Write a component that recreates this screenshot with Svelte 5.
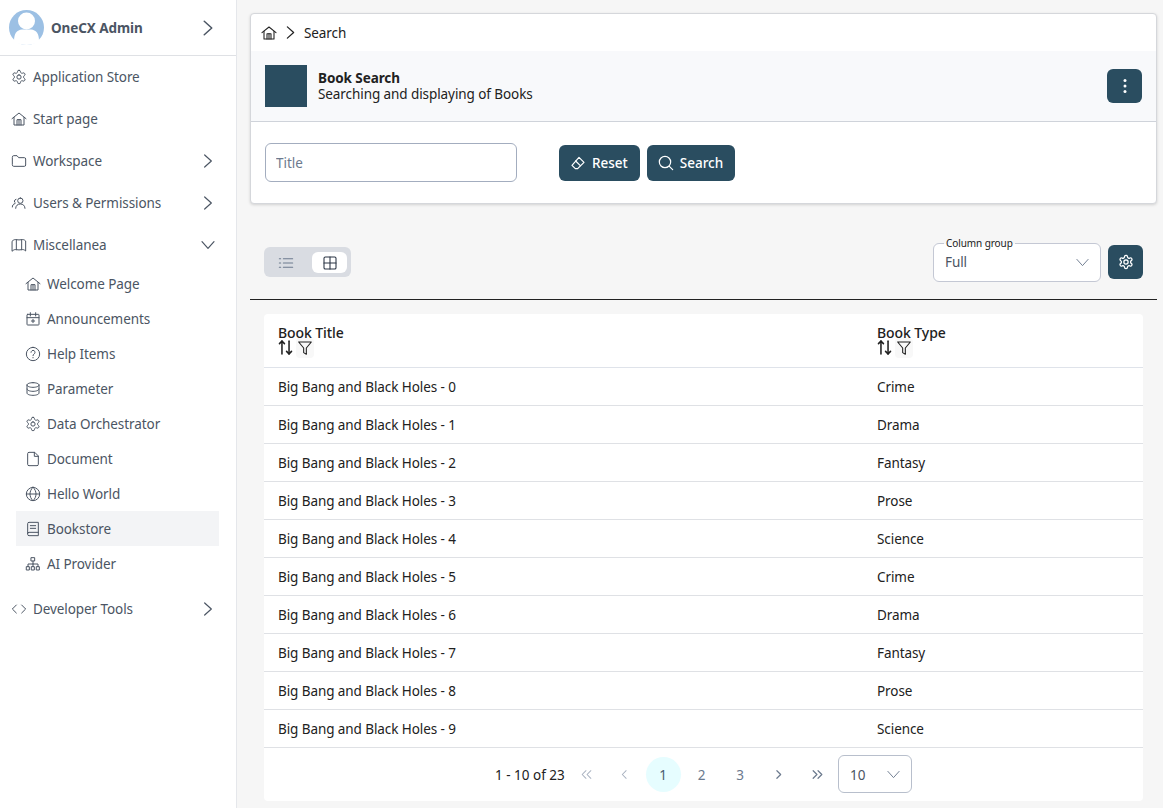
<script>
  const icons = {
    gear: ["M12.220 2h-.44a2 2 0 0 0-2 2v.18a2 2 0 0 1-1 1.730l-.43.25a2 2 0 0 1-2 0l-.15-.08a2 2 0 0 0-2.730.73l-.22.38a2 2 0 0 0 .73 2.730l.15.1a2 2 0 0 1 1 1.720v.51a2 2 0 0 1-1 1.740l-.15.09a2 2 0 0 0-.73 2.730l.22.38a2 2 0 0 0 2.730.73l.15-.08a2 2 0 0 1 2 0l.43.25a2 2 0 0 1 1 1.730V20a2 2 0 0 0 2 2h.44a2 2 0 0 0 2-2v-.18a2 2 0 0 1 1-1.730l.43-.25a2 2 0 0 1 2 0l.15.08a2 2 0 0 0 2.730-.73l.22-.39a2 2 0 0 0-.73-2.730l-.15-.08a2 2 0 0 1-1-1.740v-.5a2 2 0 0 1 1-1.740l.15-.09a2 2 0 0 0 .73-2.730l-.22-.38a2 2 0 0 0-2.730-.73l-.15.08a2 2 0 0 1-2 0l-.43-.25a2 2 0 0 1-1-1.730V4a2 2 0 0 0-2-2z", "M12 8.800a3.200 3.200 0 1 0 0 6.400 3.200 3.200 0 0 0 0-6.400z"],
    home: ["M1.500 11.500 12 3l10.500 8.500", "M4.500 9.500V21h15V9.500", "M9 21v-8h6v8", "M12 13v8"],
    folder: ["M2 6a2 2 0 0 1 2-2h5l2.500 3H20a2 2 0 0 1 2 2v9a2 2 0 0 1-2 2H4a2 2 0 0 1-2-2z"],
    users: ["M14 4.500a4 4 0 1 0 0 8 4 4 0 0 0 0-8z", "M7 20c0-4 3-6.500 7-6.500s7 2.500 7 6.500", "M7.500 6.500a3 3 0 0 0-1 5.500", "M2 18c0-2.500 1.200-4.300 3.500-5"],
    map: ["M2 6c2-2 4-2.500 6-2 2.500.5 5.500.5 8 0 2-.5 4 0 6 2v15c-2-2-4-2.500-6-2-2.500.5-5.500.5-8 0-2-.5-4 0-6 2z", "M8 3.800v15.400", "M16 3.800v15.400"],
    calendar: ["M4 5h16a1 1 0 0 1 1 1v14a1 1 0 0 1-1 1H4a1 1 0 0 1-1-1V6a1 1 0 0 1 1-1z", "M3 10h18", "M8 2.500v5", "M16 2.500v5", "M12 12.500v5", "M9.500 15h5"],
    help: ["M12 2a10 10 0 1 0 0 20 10 10 0 0 0 0-20z", "M9 9.500a3 3 0 1 1 4.500 2.600c-1 .6-1.500 1.300-1.500 2.400", "M12 17.200v.6"],
    database: ["M12 2.500c5 0 9 1.500 9 3.500s-4 3.500-9 3.500S3 8 3 6s4-3.500 9-3.500z", "M3 6v12c0 2 4 3.500 9 3.500s9-1.500 9-3.500V6", "M3 12c0 2 4 3.500 9 3.500s9-1.500 9-3.500"],
    file: ["M14 2H6a2 2 0 0 0-2 2v16a2 2 0 0 0 2 2h12a2 2 0 0 0 2-2V8z", "M14 2v6h6"],
    globe: ["M12 2a10 10 0 1 0 0 20 10 10 0 0 0 0-20z", "M2 12h20", "M12 2c3 2.800 4.500 6.200 4.500 10s-1.500 7.200-4.500 10c-3-2.800-4.500-6.200-4.500-10S9 4.800 12 2z"],
    book: ["M4 19V4a2 2 0 0 1 2-2h14v20H6a2 2 0 0 1-2-2v-1a2 2 0 0 1 2-2h14", "M8 7h8", "M8 11h8"],
    sitemap: ["M9.500 2.500h5v5h-5z", "M12 7.500V12", "M4.500 16v-4h15v4", "M12 12v4", "M2.500 16h4v5h-4z", "M10 16h4v5h-4z", "M17.500 16h4v5h-4z"],
    code: ["M8 6l-6 6 6 6", "M16 6l6 6-6 6"],
    right: ["M7 3l10 9-10 9"],
    down: ["M3 7l9 10 9-10"],
    eraser: ["M13.500 3.500 21 11 11.500 20.500H8L3 15.500z", "M8.500 9l7 7"],
    search: ["M10.500 2a8.500 8.500 0 1 0 0 17 8.500 8.500 0 0 0 0-17z", "M17 17l5 5"],
    list: ["M8 5.500h14", "M8 12h14", "M8 18.500h14", "M2 5.500h2", "M2 12h2", "M2 18.500h2"],
    table: ["M5 3h14a2 2 0 0 1 2 2v14a2 2 0 0 1-2 2H5a2 2 0 0 1-2-2V5a2 2 0 0 1 2-2z", "M3 12h18", "M12 3v18"],
    sort: ["M7 21V3", "M3.500 6.500 7 3l3.500 3.500", "M17 3v18", "M13.500 17.500 17 21l3.500-3.500"],
    filter: ["M2.500 3h19l-7.500 9v9.500l-4-2.500v-7z"],
    first: ["M11 5l-7 7 7 7", "M20 5l-7 7 7 7"],
    prev: ["M15 5l-7 7 7 7"],
    next: ["M9 5l7 7-7 7"],
    last: ["M4 5l7 7-7 7", "M13 5l7 7-7 7"]
  };

  const topBefore = [
    { icon: "gear", label: "Application Store" },
    { icon: "home", label: "Start page" },
    { icon: "folder", label: "Workspace", arrow: "right" },
    { icon: "users", label: "Users & Permissions", arrow: "right" },
    { icon: "map", label: "Miscellanea", arrow: "down" }
  ];

  const subItems = [
    { icon: "home", label: "Welcome Page" },
    { icon: "calendar", label: "Announcements" },
    { icon: "help", label: "Help Items" },
    { icon: "database", label: "Parameter" },
    { icon: "gear", label: "Data Orchestrator" },
    { icon: "file", label: "Document" },
    { icon: "globe", label: "Hello World" },
    { icon: "book", label: "Bookstore", active: true },
    { icon: "sitemap", label: "AI Provider" }
  ];

  const types = ["Crime", "Drama", "Fantasy", "Prose", "Science"];
  const books = Array.from({ length: 10 }, (_, i) => ({
    title: `Big Bang and Black Holes - ${i}`,
    type: types[i % 5]
  }));
</script>

{#snippet icon(name, size = 16, width = 1.5)}
  <svg class="icon" viewBox="0 0 24 24" width={size} height={size} stroke-width={width}>
    {#each icons[name] as d}
      <path {d} />
    {/each}
  </svg>
{/snippet}

<div class="layout">
  <aside class="sidebar">
    <div class="profile">
      <svg class="avatar" viewBox="0 0 35 35" width="35" height="35">
        <circle cx="17.500" cy="17.500" r="17.500" fill="#9cc0e4" />
        <circle cx="17.500" cy="11" r="8.500" fill="#fff" />
        <path d="M5 31c0-8 3-11 8-11.500h9c5 .5 8 3.500 8 11.500-3 2.700-7.500 4-12.500 4S8 33.700 5 31z" fill="#fff" />
      </svg>
      <span class="profile-name">OneCX Admin</span>
      <span class="arrow">{@render icon("right", 18, 2)}</span>
    </div>

    <nav>
      {#each topBefore as item}
        <div class="nav-item">
          {@render icon(item.icon)}
          <span>{item.label}</span>
          {#if item.arrow}
            <span class="arrow">{@render icon(item.arrow, 16, 1.8)}</span>
          {/if}
        </div>
      {/each}

      <div class="sub-list">
        {#each subItems as item}
          <div class="sub-item" class:active={item.active}>
            {@render icon(item.icon)}
            <span>{item.label}</span>
          </div>
        {/each}
      </div>

      <div class="nav-item dev">
        {@render icon("code")}
        <span>Developer Tools</span>
        <span class="arrow">{@render icon("right", 16, 1.8)}</span>
      </div>
    </nav>
  </aside>

  <main class="content">
    <section class="search-card">
      <div class="breadcrumb">
        {@render icon("home", 16, 1.6)}
        {@render icon("right", 15, 2)}
        <span>Search</span>
      </div>
      <div class="page-header">
        <div class="logo"></div>
        <div class="titles">
          <div class="page-title">Book Search</div>
          <div>Searching and displaying of Books</div>
        </div>
        <button class="btn square more" aria-label="More actions">
          <svg viewBox="0 0 4 16" width="4" height="16" fill="#fff">
            <circle cx="2" cy="2.500" r="1.500" /><circle cx="2" cy="8" r="1.500" /><circle cx="2" cy="13.500" r="1.500" />
          </svg>
        </button>
      </div>
      <div class="criteria">
        <input class="title-input" placeholder="Title" />
        <div class="criteria-buttons">
          <button class="btn">{@render icon("eraser", 16, 1.8)}Reset</button>
          <button class="btn">{@render icon("search", 16, 1.8)}Search</button>
        </div>
      </div>
    </section>

    <div class="toolbar">
      <div class="view-toggle">
        <span class="toggle-opt">{@render icon("list", 16, 1.6)}</span>
        <span class="toggle-opt selected">{@render icon("table", 16, 1.6)}</span>
      </div>
      <div class="toolbar-right">
        <div class="group-select">
          <span class="float-label">Column group</span>
          <span>Full</span>
          {@render icon("down", 15, 1.5)}
        </div>
        <button class="btn square" aria-label="Settings">{@render icon("gear", 16, 1.9)}</button>
      </div>
    </div>

    <div class="results">
      <div class="table-card">
        <table>
          <thead>
            <tr>
              <th class="col-title">
                <div>Book Title</div>
                <div class="th-icons">{@render icon("sort", 17, 2.2)}<span class="filter">{@render icon("filter", 16, 1.6)}</span></div>
              </th>
              <th>
                <div>Book Type</div>
                <div class="th-icons">{@render icon("sort", 17, 2.2)}<span class="filter">{@render icon("filter", 16, 1.6)}</span></div>
              </th>
            </tr>
          </thead>
          <tbody>
            {#each books as book}
              <tr>
                <td>{book.title}</td>
                <td>{book.type}</td>
              </tr>
            {/each}
          </tbody>
        </table>
        <div class="paginator">
          <span class="page-info">1 - 10 of 23</span>
          <span class="page-btn disabled">{@render icon("first", 13, 1.9)}</span>
          <span class="page-btn disabled">{@render icon("prev", 13, 1.9)}</span>
          <span class="page-btn current">1</span>
          <span class="page-btn">2</span>
          <span class="page-btn">3</span>
          <span class="page-btn">{@render icon("next", 13, 2.2)}</span>
          <span class="page-btn">{@render icon("last", 13, 2.2)}</span>
          <div class="rows-select">
            <span>10</span>
            {@render icon("down", 15, 1.5)}
          </div>
        </div>
      </div>
    </div>
  </main>
</div>

<style>
  :global(body) {
    margin: 0;
    background: #f6f6f6;
    font-family: "Noto Sans", "Open Sans", sans-serif;
    font-size: 13.500px;
    letter-spacing: -0.08px;
    color: #212121;
  }

  .icon {
    fill: none;
    stroke: currentColor;
    stroke-linecap: round;
    stroke-linejoin: round;
    flex: none;
  }

  .layout {
    display: flex;
    height: 808px;
    overflow: hidden;
  }

  .sidebar {
    width: 236px;
    flex: none;
    background: #fff;
    border-right: 1px solid #e5e7eb;
    color: #4b5563;
  }

  .profile {
    height: 55px;
    display: flex;
    align-items: center;
    padding: 0 19px 0 9px;
    border-bottom: 1px solid #dfe1e5;
  }

  .avatar {
    flex: none;
    margin-right: 7px;
  }

  .profile-name {
    font-weight: 700;
  }

  .arrow {
    margin-left: auto;
    display: flex;
  }

  .nav-item {
    height: 42px;
    display: flex;
    align-items: center;
    gap: 6px;
    padding: 0 20px 0 11px;
  }

  .dev {
    margin-top: 6.500px;
  }

  .sub-list {
    padding: 0 17px 0 16px;
  }

  .sub-item {
    height: 35px;
    display: flex;
    align-items: center;
    gap: 6px;
    padding-left: 9px;
  }

  .sub-item.active {
    background: #f3f4f6;
  }

  .content {
    flex: 1;
    min-width: 0;
    padding: 13px 6px 0 13px;
  }

  .search-card {
    background: #fff;
    border: 1px solid #d5d7db;
    border-radius: 4px;
    box-shadow: 0 1px 3px rgba(0, 0, 0, 0.15);
  }

  .breadcrumb {
    height: 37px;
    display: flex;
    align-items: center;
    gap: 6px;
    padding-left: 10px;
  }

  .page-header {
    height: 70px;
    display: flex;
    align-items: center;
    padding: 0 14px;
    background: #f8f9fb;
    border-bottom: 1px solid #cfd3da;
  }

  .logo {
    width: 42px;
    height: 42px;
    background: #2a4d60;
    margin-right: 11px;
  }

  .titles {
    line-height: 16px;
  }

  .page-title {
    font-weight: 700;
  }

  .more {
    margin-left: auto;
  }

  .criteria {
    height: 81px;
    display: flex;
    align-items: center;
    padding-left: 14px;
  }

  .title-input {
    width: 252px;
    height: 39px;
    box-sizing: border-box;
    padding: 0 10px;
    border: 1px solid #a3adbf;
    border-radius: 6px;
    font: inherit;
    outline: none;
  }

  .title-input::placeholder {
    color: #6c7a8e;
    opacity: 1;
  }

  .criteria-buttons {
    display: flex;
    gap: 7px;
    margin-left: 42px;
  }

  .btn {
    height: 36px;
    display: flex;
    align-items: center;
    gap: 6px;
    padding: 0 12px 0 11px;
    border: none;
    border-radius: 6px;
    background: #2a4d60;
    color: #fff;
    font: inherit;
    font-weight: 500;
  }

  .btn.square {
    width: 35px;
    height: 34px;
    padding: 0;
    justify-content: center;
  }

  .toolbar {
    height: 39px;
    margin-top: 39px;
    padding: 0 14px;
    display: flex;
    align-items: flex-start;
    justify-content: space-between;
  }

  .view-toggle {
    width: 87px;
    height: 30px;
    margin-top: 4px;
    box-sizing: border-box;
    padding: 5px 4px 4px;
    display: flex;
    justify-content: space-between;
    background: #d9dce2;
    border-radius: 6px;
  }

  .toggle-opt {
    width: 35px;
    height: 21px;
    display: flex;
    align-items: center;
    justify-content: center;
    color: #6c7a8e;
  }

  .toggle-opt.selected {
    background: #fff;
    border-radius: 6px;
    color: #2a3444;
  }

  .toolbar-right {
    display: flex;
    align-items: flex-start;
    gap: 7px;
  }

  .toolbar-right .btn {
    margin-top: 2px;
  }

  .group-select {
    position: relative;
    width: 168px;
    height: 39px;
    box-sizing: border-box;
    padding: 0 10px 1px 11px;
    display: flex;
    align-items: center;
    justify-content: space-between;
    background: #fff;
    border: 1px solid #c4c8d4;
    border-radius: 6px;
    color: #4b5563;
  }

  .group-select .icon {
    color: #6c7a8e;
  }

  .float-label {
    position: absolute;
    left: 10px;
    top: -7px;
    padding: 0 2px;
    font-size: 10px;
    line-height: 13px;
    color: #212121;
    background: linear-gradient(#f6f6f6 50%, #fff 50%);
  }

  .results {
    margin-top: 17px;
    padding: 14px 14px 0;
    border-top: 1px solid #222;
  }

  .table-card {
    background: #fff;
    border-radius: 4px;
  }

  table {
    width: 100%;
    border-collapse: collapse;
    table-layout: fixed;
  }

  th {
    height: 53px;
    padding: 0 14px;
    text-align: left;
    font-size: 14px;
    font-weight: 500;
    line-height: 15px;
    border-bottom: 1px solid #dfe3ea;
    box-sizing: border-box;
  }

  .col-title {
    width: 599px;
  }

  .th-icons {
    display: flex;
    align-items: center;
    gap: 2px;
    height: 15px;
    margin-left: -1px;
  }

  .filter {
    display: flex;
    padding: 2px 1px;
    background: #f8f8f8;
    border-radius: 4px;
  }

  td {
    height: 38px;
    padding: 1px 14px 0;
    box-sizing: border-box;
    border-bottom: 1px solid #dfe1e5;
  }

  .paginator {
    height: 53px;
    display: flex;
    align-items: center;
    justify-content: center;
    gap: 3.500px;
  }

  .page-info {
    width: 70px;
    letter-spacing: 0;
    padding-top: 1px;
    white-space: nowrap;
  }

  .page-btn {
    width: 35px;
    height: 35px;
    box-sizing: border-box;
    padding-top: 1px;
    border-radius: 50%;
    display: flex;
    align-items: center;
    justify-content: center;
    color: #6c7a8e;
  }

  .page-btn.disabled {
    color: #a9b2c0;
  }

  .page-btn.current {
    background: #e6fdff;
    color: #4b5c70;
  }

  .rows-select {
    width: 74px;
    height: 38px;
    box-sizing: border-box;
    padding: 1px 10px 0 11px;
    display: flex;
    align-items: center;
    justify-content: space-between;
    border: 1px solid #b8bfcc;
    border-radius: 6px;
    color: #4b5563;
  }

  .rows-select .icon {
    color: #6c7a8e;
  }
</style>
